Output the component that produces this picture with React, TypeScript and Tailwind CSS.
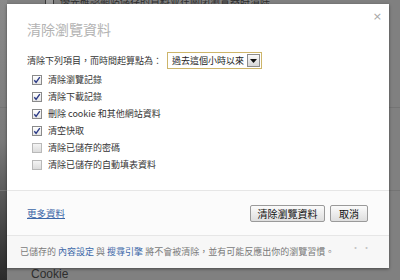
import React from 'react';

const CJK = '"Noto Sans CJK TC", "Noto Sans", sans-serif';

const ITEMS: { label: string; checked: boolean }[] = [
  { label: '清除瀏覽記錄', checked: true },
  { label: '清除下載記錄', checked: true },
  { label: '刪除 cookie 和其他網站資料', checked: true },
  { label: '清空快取', checked: true },
  { label: '清除已儲存的密碼', checked: false },
  { label: '清除已儲存的自動填表資料', checked: false },
];

function CheckBox({ checked }: { checked: boolean }) {
  if (!checked) {
    return (
      <div className="w-[10px] h-[10px] border border-[#b9b9b9] bg-gradient-to-b from-[#f4f4f4] to-[#dcdcdc]" />
    );
  }
  return (
    <div className="w-[10px] h-[10px] border border-[#8a8a8a] bg-gradient-to-b from-[#ffffff] to-[#e6e6e6] flex items-center justify-center">
      <svg width="8" height="8" viewBox="0 0 8 8">
        <path d="M1.3 4.2 L3.1 6.4 L6.8 1.2" fill="none" stroke="#2b3a86" strokeWidth="1.4" />
      </svg>
    </div>
  );
}

export default function App() {
  return (
    <div
      className="relative w-[400px] h-[280px] overflow-hidden bg-[#808080]"
      style={{ fontFamily: CJK }}
    >
      {/* page behind the overlay */}
      <div className="absolute left-0 top-0 w-[7px] h-full bg-gradient-to-b from-[#8a8a8a] via-[#7a7a7a] to-[#2a2a2a]" />
      <div className="absolute left-0 right-0 top-[107px] h-px bg-[#747474]" />
      <div className="absolute left-0 right-0 top-[190px] h-px bg-[#747474]" />
      <div className="absolute left-[45px] top-[-7px] flex items-center gap-[6px] text-[10px] text-[#2e2e2e] whitespace-nowrap">
        <div className="w-[9px] h-[9px] border border-[#3a3a3a] bg-[#9a9a9a]" />
        <span>優先確認網站儲存的資料並在關閉瀏覽器時清除</span>
      </div>
      <div className="absolute left-[31px] top-[265px] text-[12px] text-[#2e2e2e]" style={{ fontFamily: '"Liberation Sans", sans-serif' }}>
        Cookie
      </div>

      {/* dialog */}
      <div className="absolute left-[7px] top-[4px] w-[382px] h-[264px] bg-white flex flex-col shadow-[0_1px_3px_rgba(0,0,0,0.45)]">
        <div className="absolute right-[7px] top-[7px] text-[#a6a6a6] text-[11px] leading-none" style={{ fontFamily: '"DejaVu Sans", sans-serif' }}>
          ×
        </div>

        <div className="px-[20px] pt-[16px]">
          <div className="text-[14px] leading-[18px] text-[#b3b3b3]">清除瀏覽資料</div>

          <div className="mt-[14px] flex items-center h-[17px] text-[9px] text-[#333] whitespace-nowrap">
            <span className="w-[140px]">清除下列項目，而時間起算點為：</span>
            <div className="h-[17px] w-[95px] border border-[#cdb56a] flex items-center justify-between pl-[4px] pr-[1px] bg-white">
              <span className="text-[#222]">過去這個小時以來</span>
              <div className="w-[13px] h-[13px] border border-[#8c8c8c] bg-gradient-to-b from-[#fafafa] to-[#d6d6d6] flex items-center justify-center">
                <svg width="7" height="4" viewBox="0 0 7 4">
                  <path d="M0 0 L7 0 L3.5 4 Z" fill="#111" />
                </svg>
              </div>
            </div>
          </div>

          <div className="mt-[2px] pl-[5px] flex flex-col">
            {ITEMS.map((item) => (
              <div key={item.label} className="h-[17px] flex items-center gap-[6px] text-[9px] text-[#333] whitespace-nowrap">
                <CheckBox checked={item.checked} />
                <span>{item.label}</span>
              </div>
            ))}
          </div>
        </div>

        <div className="flex-1" />

        <div className="h-[45px] border-t border-[#e6e6e6] bg-[#fbfbfb] flex items-center justify-between pl-[20px] pr-[21px]">
          <span className="text-[9.5px] text-[#3c67a8] underline">更多資料</span>
          <div className="flex items-center gap-[5px]">
            <button className="h-[17px] w-[75px] border border-[#9a9a9a] rounded-[2px] bg-gradient-to-b from-[#fbfbfb] to-[#dedede] text-[10px] text-[#111] flex items-center justify-center whitespace-nowrap">
              清除瀏覽資料
            </button>
            <button className="h-[17px] w-[38px] border border-[#9a9a9a] rounded-[2px] bg-gradient-to-b from-[#fbfbfb] to-[#dedede] text-[10px] text-[#111] flex items-center justify-center whitespace-nowrap">
              取消
            </button>
          </div>
        </div>

        <div className="h-[33px] border-t border-[#e6e6e6] bg-[#f7f7f7] flex items-center justify-between pl-[13px] pr-[16px] text-[9px] text-[#7a7a7a] whitespace-nowrap">
          <span>
            已儲存的 <span className="text-[#3c67a8]">內容設定</span> 與{' '}
            <span className="text-[#3c67a8]">搜尋引擎</span> 將不會被清除，並有可能反應出你的瀏覽習慣。
          </span>
          <span className="text-[#c4c4c4] tracking-[2px] -mt-[8px]">··</span>
        </div>
      </div>
    </div>
  );
}
